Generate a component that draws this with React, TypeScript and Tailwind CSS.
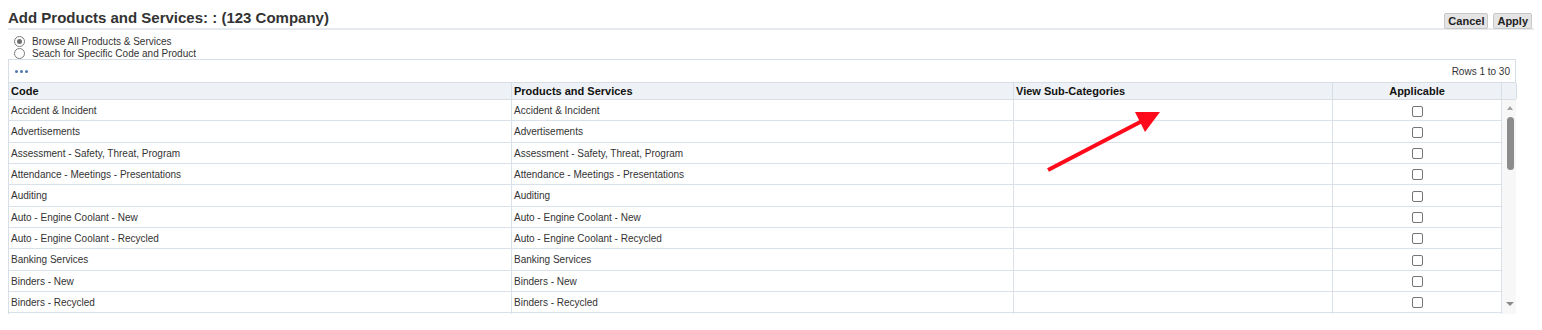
import React from 'react'

const rows = [
  'Accident & Incident',
  'Advertisements',
  'Assessment - Safety, Threat, Program',
  'Attendance - Meetings - Presentations',
  'Auditing',
  'Auto - Engine Coolant - New',
  'Auto - Engine Coolant - Recycled',
  'Banking Services',
  'Binders - New',
  'Binders - Recycled',
]

function Radio({ checked, label }: { checked?: boolean; label: string }) {
  return (
    <label className="flex items-center h-[12px] gap-[7px]">
      <span className="w-[11px] h-[11px] rounded-full border border-[#7a7a7a] bg-white flex items-center justify-center">
        {checked && <span className="w-[5px] h-[5px] rounded-full bg-[#6d6d6d]" />}
      </span>
      <span>{label}</span>
    </label>
  )
}

function Checkbox() {
  return <span className="block w-[11px] h-[11px] rounded-[2px] border border-[#757575] bg-white" />
}

export default function App() {
  return (
    <div
      className="relative w-[1542px] h-[330px] bg-white text-[#222] overflow-hidden"
      style={{ fontFamily: '"Liberation Sans", Arial, sans-serif' }}
    >
      {/* title bar */}
      <div className="flex justify-between items-start mx-2 pt-[9px] h-[30px] border-b-2 border-[#e6e9ed]">
        <h1 className="text-[15px] leading-[17px] font-bold text-[#333]">
          Add Products and Services: : (123 Company)
        </h1>
        <div className="flex gap-[5px] mt-[4px] mr-[2px]">
          <button className="h-[16px] px-[3px] text-[11px] leading-[14px] font-bold text-[#222] bg-[#e4e4e4] border border-[#c8c8c8] rounded-[2px]">
            Cancel
          </button>
          <button className="h-[16px] px-[3px] text-[11px] leading-[14px] font-bold text-[#222] bg-[#e4e4e4] border border-[#c8c8c8] rounded-[2px]">
            Apply
          </button>
        </div>
      </div>

      {/* search mode */}
      <div className="flex flex-col ml-[14px] mt-[5px] text-[10px] text-[#333]">
        <Radio checked label="Browse All Products & Services" />
        <Radio label="Seach for Specific Code and Product" />
      </div>

      {/* table */}
      <div className="ml-2 w-[1508px]">
        <div className="flex items-center justify-between h-[23px] border border-b-0 border-[#d7dee6] px-[5px] text-[10px] text-[#333]">
          <div className="flex gap-[2px] pl-[1px]">
            <span className="w-[3px] h-[3px] rounded-full bg-[#4f78b0]" />
            <span className="w-[3px] h-[3px] rounded-full bg-[#4f78b0]" />
            <span className="w-[3px] h-[3px] rounded-full bg-[#4f78b0]" />
          </div>
          <span>Rows 1 to 30</span>
        </div>
        <div className="grid grid-cols-[503px_502px_319px_169px_15px] h-[18px] bg-[#eef1f5] border-y border-l border-[#d7dee6] text-[11px] leading-[16px] font-bold text-[#111]">
          <div className="border-r border-[#d7dee6] pl-[2px]">Code</div>
          <div className="border-r border-[#d7dee6] pl-[2px]">Products and Services</div>
          <div className="border-r border-[#d7dee6] pl-[2px]">View Sub-Categories</div>
          <div className="border-r border-[#d7dee6] text-center">Applicable</div>
          <div className="border-r border-[#d7dee6]" />
        </div>
        <div className="flex">
          <div className="w-[1494px] border-l border-[#d7dee6]">
            {rows.map((r) => (
              <div
                key={r}
                className="grid grid-cols-[503px_502px_319px_169px] h-[21.33px] border-b border-[#dbe1e8] text-[10px] leading-[22px] text-[#333]"
              >
                <div className="border-r border-[#dbe1e8] pl-[2px] whitespace-nowrap">{r}</div>
                <div className="border-r border-[#dbe1e8] pl-[2px] whitespace-nowrap">{r}</div>
                <div className="border-r border-[#dbe1e8]" />
                <div className="border-r border-[#dbe1e8] flex items-center justify-center">
                  <Checkbox />
                </div>
              </div>
            ))}
          </div>
          {/* scrollbar */}
          <div className="w-[14px] h-[214px] bg-[#f7f7f7] flex flex-col items-center pt-[6px] pb-[8px]">
            <span className="w-0 h-0 border-x-[3px] border-x-transparent border-b-[4px] border-b-[#a3a3a3] ml-[2px]" />
            <span className="w-[7px] h-[53px] mt-[7px] ml-[2px] rounded-full bg-[#8c8c8c]" />
            <span className="flex-1" />
            <span className="w-0 h-0 border-x-[4px] border-x-transparent border-t-[4px] border-t-[#8a8a8a] ml-[2px]" />
          </div>
        </div>
      </div>

      {/* red annotation arrow */}
      <svg className="absolute left-0 top-0 pointer-events-none" width="1542" height="330">
        <line x1="1048" y1="170" x2="1146" y2="119" stroke="#ff0a1a" strokeWidth="4" />
        <polygon points="1135,112 1160,112 1145,132" fill="#ff0a1a" />
      </svg>
    </div>
  )
}
